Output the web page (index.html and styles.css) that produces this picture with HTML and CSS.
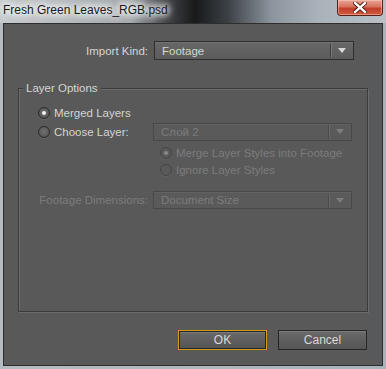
FILE: index.html
```html
<!DOCTYPE html>
<html lang="en">
<head>
    <meta charset="UTF-8">
    <title>Fresh Green Leaves_RGB.psd</title>
    <link rel="stylesheet" href="styles.css">
</head>
<body>
<div class="window">
    <div class="titlebar">
        <span class="title">Fresh Green Leaves_RGB.psd</span>
        <div class="close">
            <svg width="14" height="11" viewBox="0 0 14 11">
                <path d="M2 1 L12 10 M12 1 L2 10" stroke="#3a0a04" stroke-width="4" stroke-linecap="square"/>
                <path d="M2 1 L12 10 M12 1 L2 10" stroke="#ffffff" stroke-width="2.4" stroke-linecap="square"/>
            </svg>
        </div>
    </div>

    <div class="client">
        <!-- Import Kind -->
        <div class="kind-row">
            <label class="kind-label">Import Kind:</label>
            <div class="dropdown">
                <span class="dd-text">Footage</span>
                <span class="dd-sep"></span>
                <span class="dd-arrow"></span>
            </div>
        </div>

        <!-- Layer Options -->
        <fieldset class="group">
            <legend>Layer Options</legend>
            <div class="grid">
                <div class="radio-row span">
                    <span class="radio checked"></span>
                    <span>Merged Layers</span>
                </div>

                <div class="radio-row">
                    <span class="radio"></span>
                    <span>Choose Layer:</span>
                </div>
                <div class="dropdown small disabled">
                    <span class="dd-text">Слой 2</span>
                    <span class="dd-sep"></span>
                    <span class="dd-arrow"></span>
                </div>

                <div class="sub">
                    <div class="radio-row sub-row disabled">
                        <span class="radio checked"></span>
                        <span>Merge Layer Styles into Footage</span>
                    </div>
                    <div class="radio-row sub-row disabled">
                        <span class="radio"></span>
                        <span>Ignore Layer Styles</span>
                    </div>
                </div>

                <label class="dim-label disabled">Footage Dimensions:</label>
                <div class="dropdown small disabled dim-dd">
                    <span class="dd-text">Document Size</span>
                    <span class="dd-sep"></span>
                    <span class="dd-arrow"></span>
                </div>
            </div>
        </fieldset>

        <!-- Buttons -->
        <div class="buttons">
            <button class="btn default"><span>OK</span></button>
            <button class="btn"><span>Cancel</span></button>
        </div>
    </div>
</div>
</body>
</html>
```

FILE: styles.css
```css
* {
    box-sizing: border-box;
}

body {
    margin: 0;
    width: 386px;
    height: 369px;
    overflow: hidden;
    font-family: 'Liberation Sans', Arial, sans-serif;
    font-size: 11.5px;
}

.window {
    width: 386px;
    height: 369px;
    display: flex;
    flex-direction: column;
    background: linear-gradient(90deg, #b4bcc2 0, #a9b3bb 100%);
}

.titlebar {
    height: 23px;
    display: flex;
    align-items: flex-start;
    background: linear-gradient(90deg, #c6cacd 0, #a4a9ad 130px, #45484b 165px, #17191b 195px, #3c4146 228px, #8d969e 272px, #aab3ba 320px, #b9c1c7 386px);
}

.title {
    padding: 3px 0 0 3px;
    font-size: 12px;
    color: #1b1b1b;
    text-shadow: 0 0 6px #fff, 0 0 6px #fff, 0 0 10px #fff, 0 0 12px #fff;
}

.close {
    margin-left: auto;
    margin-right: 3px;
    width: 46px;
    height: 16px;
    display: flex;
    align-items: center;
    justify-content: center;
    border: 1px solid #5a2016;
    border-top: none;
    border-radius: 0 0 4px 4px;
    background: linear-gradient(180deg, #e8a595 0, #d7725f 45%, #c2402a 55%, #d05a3e 100%);
    box-shadow: inset 0 0 0 1px rgba(255, 210, 200, 0.5);
}

.client {
    flex: 1;
    margin: 0 3px 3px 3px;
    background-color: #595959;
    border: 1px solid #2e2e2e;
    color: #d4d4d4;
    display: flex;
    flex-direction: column;
}

.kind-row {
    display: flex;
    align-items: center;
    margin-top: 17px;
}

.kind-label {
    width: 144px;
    text-align: right;
    margin-right: 6px;
}

.dropdown {
    width: 200px;
    height: 19px;
    display: flex;
    align-items: center;
    border: 1px solid #2f2f2f;
    background: linear-gradient(180deg, #676767 0, #5c5c5c 100%);
    box-shadow: inset 0 1px 0 #727272;
}

.dd-text {
    flex: 1;
    padding-left: 7px;
}

.dd-sep {
    width: 2px;
    height: 13px;
    border-left: 1px solid #3b3b3b;
    border-right: 1px solid #7a7a7a;
}

.dd-arrow {
    width: 0;
    height: 0;
    margin: 0 7px 0 6px;
    border-left: 4px solid transparent;
    border-right: 4px solid transparent;
    border-top: 5px solid #d8d8d8;
}

.dropdown.small {
    width: 199px;
    height: 18px;
}

.dropdown.disabled {
    border-color: #484848;
    background: #5a5a5a;
    box-shadow: inset 0 1px 0 #626262;
    color: #7c7c7c;
}

.dropdown.disabled .dd-sep {
    border-left-color: #4a4a4a;
    border-right-color: #6a6a6a;
}

.dropdown.disabled .dd-arrow {
    border-top-color: #7c7c7c;
}

.group {
    margin: 21px 14px 0 14px;
    height: 231px;
    padding: 0;
    border: 1px solid #3c3c3c;
    box-shadow: 1px 1px 0 #6c6c6c, inset 1px 1px 0 #6c6c6c;
}

.group legend {
    margin-left: 4px;
    padding: 0 3px;
    line-height: 14px;
    background-color: #595959;
}

.grid {
    display: grid;
    grid-template-columns: 129px 199px;
    column-gap: 5px;
    align-items: center;
    padding-top: 8px;
}

.span {
    grid-column: 1 / 3;
}

.radio-row {
    display: flex;
    align-items: center;
    height: 19px;
    padding-left: 19px;
}

.radio {
    width: 12px;
    height: 12px;
    margin-right: 4px;
    border-radius: 50%;
    border: 1px solid #2a2a2a;
    background: radial-gradient(circle at 50% 45%, #707070 0, #5c5c5c 60%, #4c4c4c 100%);
    box-shadow: 0 1px 0 #6a6a6a;
    display: flex;
    align-items: center;
    justify-content: center;
}

.radio.checked::after {
    content: "";
    width: 4px;
    height: 4px;
    border-radius: 50%;
    background-color: #f4f4f4;
}

.sub {
    grid-column: 2;
    margin-top: 3px;
}

.sub-row {
    height: 17px;
    padding-left: 7px;
}

.disabled {
    color: #7c7c7c;
}

.radio-row.disabled .radio {
    border-color: #444;
    background: #595959;
    box-shadow: 0 1px 0 #626262;
}

.radio-row.disabled .radio.checked::after {
    background-color: #8a8a8a;
}

.dim-label {
    text-align: right;
    margin-top: 13px;
}

.dim-dd {
    margin-top: 13px;
}

.buttons {
    display: flex;
    justify-content: flex-end;
    gap: 11px;
    margin-top: 18px;
    padding-right: 15px;
}

.btn {
    width: 89px;
    height: 20px;
    padding: 0;
    font-family: inherit;
    font-size: 12px;
    color: #d8d8d8;
    border: 1px solid #262626;
    background: linear-gradient(180deg, #6b6b6b 0, #5e5e5e 50%, #555555 100%);
    box-shadow: inset 0 1px 0 #7a7a7a;
}

.btn.default {
    border: 1px solid #d39a14;
    box-shadow: inset 0 0 0 1px #262626, inset 0 2px 0 #7a7a7a;
}
```
